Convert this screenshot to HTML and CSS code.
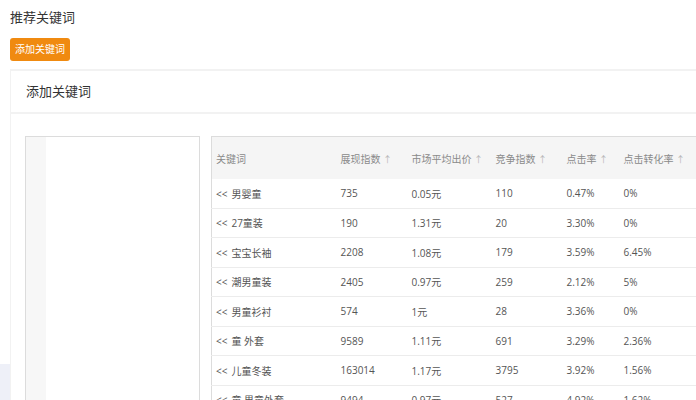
FILE: index.html
```html
<!DOCTYPE html>
<html lang="zh-CN">
<head>
<meta charset="utf-8">
<title>推荐关键词</title>
<link rel="stylesheet" href="styles.css">
</head>
<body>
<div class="page">
  <div class="gutter"><div class="gutter-block"></div></div>
  <div class="main">
    <h1 class="title">推荐关键词</h1>
    <button class="btn">添加关键词</button>
    <div class="panel">
      <div class="panel-head">添加关键词</div>
      <div class="panel-body">
        <div class="left-box"><div class="strip"></div></div>
        <table class="kw">
          <colgroup>
            <col class="c1"><col class="c2"><col class="c3"><col class="c4"><col class="c5"><col class="c6">
          </colgroup>
          <thead>
            <tr>
              <th>关键词</th>
              <th>展现指数 <span class="arr">↑</span></th>
              <th>市场平均出价 <span class="arr">↑</span></th>
              <th>竞争指数 <span class="arr">↑</span></th>
              <th>点击率 <span class="arr">↑</span></th>
              <th>点击转化率 <span class="arr">↑</span></th>
            </tr>
          </thead>
          <tbody>
            <tr><td><span class="add">&lt;&lt;</span>男婴童</td><td>735</td><td>0.05元</td><td>110</td><td>0.47%</td><td>0%</td></tr>
            <tr><td><span class="add">&lt;&lt;</span>27童装</td><td>190</td><td>1.31元</td><td>20</td><td>3.30%</td><td>0%</td></tr>
            <tr><td><span class="add">&lt;&lt;</span>宝宝长袖</td><td>2208</td><td>1.08元</td><td>179</td><td>3.59%</td><td>6.45%</td></tr>
            <tr><td><span class="add">&lt;&lt;</span>潮男童装</td><td>2405</td><td>0.97元</td><td>259</td><td>2.12%</td><td>5%</td></tr>
            <tr><td><span class="add">&lt;&lt;</span>男童衫衬</td><td>574</td><td>1元</td><td>28</td><td>3.36%</td><td>0%</td></tr>
            <tr><td><span class="add">&lt;&lt;</span>童 外套</td><td>9589</td><td>1.11元</td><td>691</td><td>3.29%</td><td>2.36%</td></tr>
            <tr><td><span class="add">&lt;&lt;</span>儿童冬装</td><td>163014</td><td>1.17元</td><td>3795</td><td>3.92%</td><td>1.56%</td></tr>
            <tr><td><span class="add">&lt;&lt;</span>童 男童外套</td><td>9494</td><td>0.97元</td><td>527</td><td>4.92%</td><td>1.62%</td></tr>
          </tbody>
        </table>
      </div>
    </div>
  </div>
</div>
</body>
</html>
```

FILE: styles.css
```css
html, body {
  margin: 0;
  padding: 0;
  background: #fff;
}
body {
  width: 696px;
  height: 400px;
  overflow: hidden;
  font-family: "Open Sans", "Noto Sans CJK SC", "Noto Sans", sans-serif;
  color: #333;
}
.page {
  display: flex;
  align-items: flex-start;
}
.gutter {
  width: 10px;
  flex: 0 0 10px;
  padding-top: 364px;
}
.gutter-block {
  height: 40px;
  background: #eef0f8;
}
.main {
  flex: 0 0 auto;
  display: flex;
  flex-direction: column;
  align-items: flex-start;
  padding-top: 8px;
}
.title {
  margin: 0;
  font-size: 13px;
  line-height: 18px;
  font-weight: normal;
  color: #333;
}
.btn {
  margin-top: 12px;
  width: 60px;
  height: 23px;
  padding: 0;
  border: 0;
  border-radius: 3px;
  background: #f08a10;
  color: #fff;
  font-family: inherit;
  font-size: 10px;
  line-height: 23px;
}
.panel {
  margin-top: 8px;
  width: 760px;
  border-top: 2px solid #f2f2f2;
  border-left: 1px solid #f2f2f2;
  background: #fff;
}
.panel-head {
  height: 41px;
  line-height: 41px;
  padding-left: 15px;
  font-size: 13px;
  color: #333;
  border-bottom: 2px solid #f2f2f2;
}
.panel-body {
  display: flex;
  align-items: flex-start;
  padding: 22px 0 0 14px;
}
.left-box {
  width: 173px;
  height: 300px;
  border: 1px solid #dcdcdc;
  display: flex;
}
.strip {
  width: 20px;
  background: #f7f7f7;
}
.kw {
  margin-left: 11px;
  width: 500px;
  border-collapse: collapse;
  border-top: 1px solid #dcdcdc;
  border-left: 1px solid #dcdcdc;
  font-size: 10px;
  table-layout: fixed;
}
.c1 { width: 125px; }
.c2 { width: 71px; }
.c3 { width: 84px; }
.c4 { width: 71px; }
.c5 { width: 57px; }
.c6 { width: 92px; }
.kw th {
  height: 42px;
  padding: 0 0 0 4px;
  text-align: left;
  font-weight: normal;
  color: #8a8a8a;
  background: #f5f5f5;
  white-space: nowrap;
}
.kw .arr {
  color: #b5b5b5;
  font-size: 9px;
}
.kw td {
  height: 28.5px;
  padding: 0 0 0 4px;
  color: #555;
  border-bottom: 1px solid #ececec;
  white-space: nowrap;
}
.kw .add {
  margin-right: 4px;
}
```
